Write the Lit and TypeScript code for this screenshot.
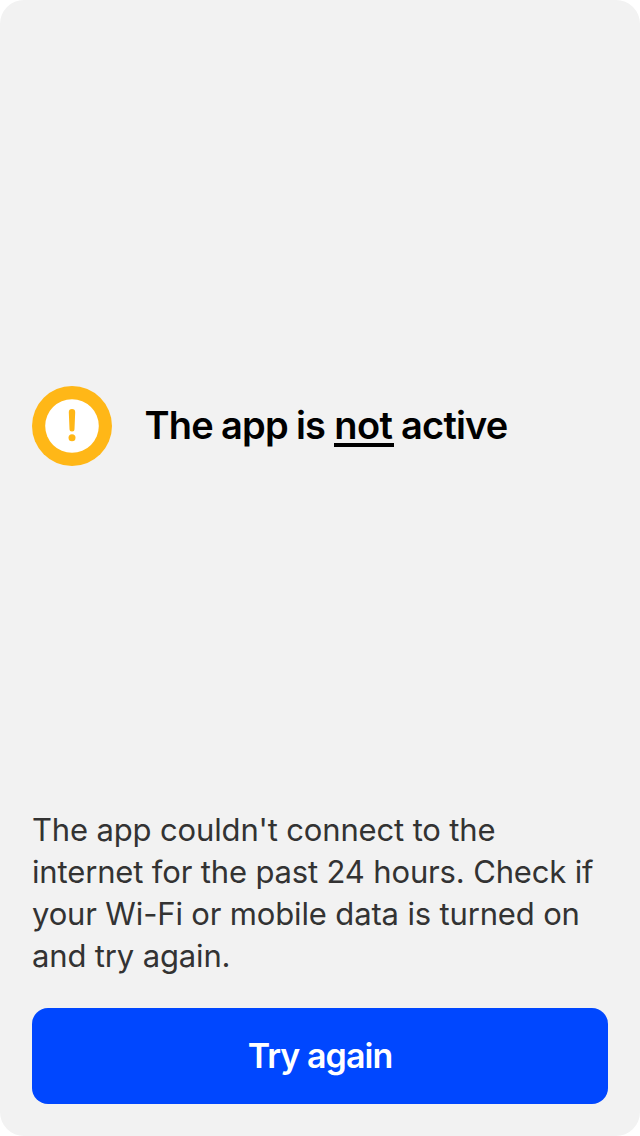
import { LitElement, html, css, svg } from "lit";
import { customElement } from "lit/decorators.js";

@customElement("app-root")
export class AppRoot extends LitElement {
  static styles = css`
    :host {
      display: block;
      background: #fff;
      font-family: Inter, "Liberation Sans", sans-serif;
    }
    .screen {
      box-sizing: border-box;
      height: 1136px;
      padding: 386px 32px 32px;
      border-radius: 24px;
      background: #f2f2f2;
      display: flex;
      flex-direction: column;
    }
    .status {
      display: flex;
      align-items: center;
      gap: 32.5px;
      height: 80px;
      flex: none;
    }
    .icon {
      width: 80px;
      height: 80px;
      flex: none;
    }
    .title {
      margin: 0 0 2px;
      font-size: 38px;
      line-height: 46px;
      font-weight: 600;
      letter-spacing: -0.84px;
      word-spacing: -0.5px;
      color: #000;
      white-space: nowrap;
    }
    .not {
      display: inline-block;
      margin: 0 -1.5px 0 0.6px;
      padding: 0 2px 0 0.4px;
      letter-spacing: -0.6px;
      background: linear-gradient(#000, #000) 0 41px / 100% 4px no-repeat;
      height: 46px;
      vertical-align: top;
    }
    .message {
      margin: auto 0 31px;
      font-size: 31px;
      line-height: 42px;
      letter-spacing: -0.15px;
      color: #333;
      white-space: nowrap;
    }
    .line {
      display: block;
    }
    .retry {
      flex: none;
      height: 96px;
      border: 0;
      border-radius: 16px;
      padding: 0;
      background: #0047ff;
      color: #fff;
      font: 600 34px/40px Inter, "Liberation Sans", sans-serif;
      letter-spacing: -0.95px;
    }
  `;

  private lines = [
    "The app couldn't connect to the",
    "internet for the past 24 hours. Check if",
    "your Wi-Fi or mobile data is turned on",
    "and try again.",
  ];

  private icon = svg`
    <circle cx="40" cy="40" r="40" fill="#ffb717" />
    <circle cx="40" cy="40" r="26.8" fill="#fff" />
    <path d="M36.8 26.2a3.2 3.2 0 0 1 6.4 0l-.7 16.8a2.5 2.5 0 0 1-5 0z" fill="#ffb717" />
    <circle cx="40" cy="51.7" r="3.5" fill="#ffb717" />
  `;

  render() {
    return html`
      <main class="screen">
        <div class="status">
          <svg class="icon" viewBox="0 0 80 80" aria-hidden="true">${this.icon}</svg>
          <h1 class="title">The app is <span class="not">not</span> active</h1>
        </div>
        <p class="message">${this.lines.map((l) => html`<span class="line">${l}</span>`)}</p>
        <button class="retry">Try again</button>
      </main>
    `;
  }
}
